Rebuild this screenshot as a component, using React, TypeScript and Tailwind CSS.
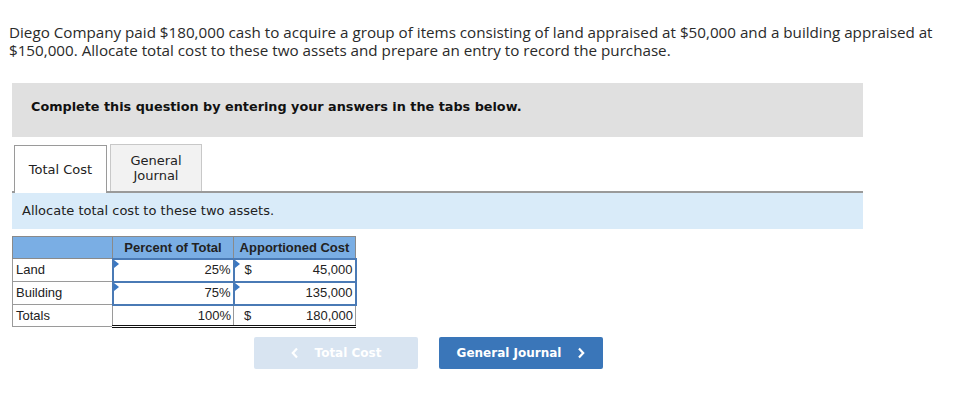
import React from 'react';

const Flag = () => (
  <span className="absolute left-0 top-0 w-0 h-0 border-t-[4px] border-b-[4px] border-l-[5px] border-t-transparent border-b-transparent border-l-[#3a78c3]" />
);

export default function App() {
  const verdana = { fontFamily: '"DejaVu Sans", Verdana, sans-serif' };
  const arial = { fontFamily: '"Liberation Sans", Arial, sans-serif' };

  return (
    <div className="w-[967px] h-[400px] bg-white text-[#222]">
      <p className="pl-[9px] pr-4 pt-[23px] text-[15.2px] leading-[18px] text-[#2a2a2a]" style={{ fontFamily: '"Open Sans", Lato, sans-serif' }}>
        Diego Company paid $180,000 cash to acquire a group of items consisting of land appraised at $50,000 and a building appraised at $150,000. Allocate total cost to these two assets and prepare an entry to record the purchase.
      </p>

      <div className="ml-[12px] mt-[24px] w-[851px] h-[54px] bg-[#e0e0e0] flex items-center pl-[19px]" style={verdana}>
        <span className="text-[12.8px] font-bold text-[#111] -mt-[6px]">Complete this question by entering your answers in the tabs below.</span>
      </div>

      <div className="ml-[12px] mt-[8px] w-[851px]" style={verdana}>
        <div className="flex items-end gap-[3px] pl-[2px] border-b-2 border-[#9a9a9a] h-[48px]">
          <div className="w-[93px] h-[48px] -mb-[2px] bg-white border border-b-0 border-[#9a9a9a] flex items-center justify-center text-[13px] text-[#222]">
            Total Cost
          </div>
          <div className="w-[92px] h-[47px] bg-[#f2f2f2] border border-b-0 border-[#c8c8c8] flex items-center justify-center text-center text-[13px] leading-[15px] text-[#222]">
            General<br />Journal
          </div>
        </div>
        <div className="h-[36px] bg-[#d9ebf9] flex items-center pl-[10px] text-[13px] text-[#222]">
          Allocate total cost to these two assets.
        </div>
      </div>

      <div className="ml-[12px] mt-[7px]" style={arial}>
        <table className="border-collapse text-[13px] text-[#222]">
          <thead>
            <tr className="bg-[#7aaee4] h-[22px]">
              <th className="w-[100px] border border-[#8a8a8a]"></th>
              <th className="w-[121px] border border-[#8a8a8a] font-bold text-[#222] text-center">Percent of Total</th>
              <th className="w-[122px] border border-[#8a8a8a] font-bold text-[#222] text-center">Apportioned Cost</th>
            </tr>
          </thead>
          <tbody>
            <tr className="h-[23px]">
              <td className="border border-[#9a9a9a] pl-[3px]">Land</td>
              <td className="border-2 border-[#4a7ab5] relative text-right pr-[2px]"><Flag />25%</td>
              <td className="border-2 border-[#4a7ab5] relative pr-[2px]"><Flag /><div className="flex justify-between pl-[10px]"><span>$</span><span>45,000</span></div></td>
            </tr>
            <tr className="h-[23px]">
              <td className="border border-[#9a9a9a] pl-[3px]">Building</td>
              <td className="border-2 border-[#4a7ab5] relative text-right pr-[2px]"><Flag />75%</td>
              <td className="border-2 border-[#4a7ab5] relative text-right pr-[2px]"><Flag />135,000</td>
            </tr>
            <tr className="h-[22px]">
              <td className="border border-[#9a9a9a] pl-[3px]">Totals</td>
              <td className="border-x border-t border-b-[3px] border-b-[#111] border-x-[#9a9a9a] border-t-[#9a9a9a] border-double text-right pr-[2px]">100%</td>
              <td className="border-x border-t border-b-[3px] border-b-[#111] border-x-[#9a9a9a] border-t-[#9a9a9a] border-double pr-[2px]"><div className="flex justify-between pl-[10px]"><span>$</span><span>180,000</span></div></td>
            </tr>
          </tbody>
        </table>
      </div>

      <div className="flex gap-[21px] ml-[254px] mt-[9px]" style={verdana}>
        <button className="w-[164px] h-[32px] rounded-[2px] bg-[#d8e4f1] text-white font-bold text-[12px] flex items-center justify-center gap-[16px]">
          <svg width="8" height="12" viewBox="0 0 8 12"><path d="M6 1.5 L1.8 6 L6 10.5" fill="none" stroke="white" strokeWidth="2.2" /></svg>
          <span>Total Cost</span>
        </button>
        <button className="w-[164px] h-[32px] rounded-[2px] bg-[#3a76b9] text-white font-bold text-[12px] flex items-center justify-center gap-[16px]">
          <span>General Journal</span>
          <svg width="8" height="12" viewBox="0 0 8 12"><path d="M2 1.5 L6.2 6 L2 10.5" fill="none" stroke="white" strokeWidth="2.2" /></svg>
        </button>
      </div>
    </div>
  );
}
